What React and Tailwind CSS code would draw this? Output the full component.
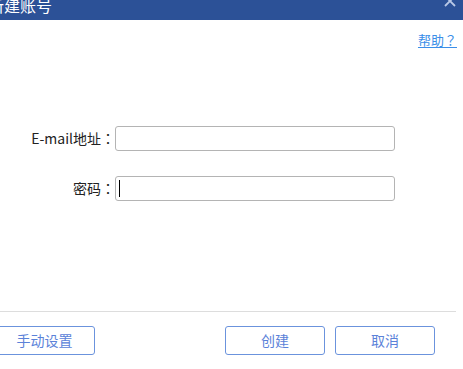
import React from 'react';

const font = { fontFamily: '"Noto Sans CJK SC", "Noto Sans", sans-serif' };
const tc = { fontFamily: '"Noto Sans CJK TC", sans-serif' };

export default function App() {
  return (
    <div className="w-[463px] h-[369px] overflow-hidden bg-white flex flex-col" style={font}>
      {/* title bar */}
      <div className="h-[20px] shrink-0 bg-[#2c5197] flex justify-between overflow-hidden">
        <span className="-ml-[12px] -mt-[5px] text-[16px] leading-[20px] text-white">新建账号</span>
        <svg width="14" height="14" viewBox="0 0 14 14" className="-mt-[6px] mr-[6px]">
          <path d="M2 2 L12 12 M12 2 L2 12" stroke="#b9c8e6" strokeWidth="1.8" />
        </svg>
      </div>

      {/* help */}
      <div className="flex justify-end pr-[6px] mt-[12px]">
        <a className="text-[13px] leading-[16px] text-[#3b8ee8] underline underline-offset-2 cursor-pointer">
          帮助<span style={tc}>？</span>
        </a>
      </div>

      {/* form */}
      <div className="flex flex-col gap-[25px] mt-[78px]">
        <div className="flex items-center">
          <label className="w-[115px] text-right text-[14px] text-[#222]">
            E-mail地址<span style={tc}>：</span>
          </label>
          <input className="w-[280px] h-[25px] border border-[#b4b4b4] rounded-[3px] outline-none px-[3px] text-[14px]" />
        </div>
        <div className="flex items-center">
          <label className="w-[115px] text-right text-[14px] text-[#222]">
            密码<span style={tc}>：</span>
          </label>
          <div className="w-[280px] h-[25px] border border-[#b4b4b4] rounded-[3px] flex items-center pl-[3px]">
            <div className="w-[1px] h-[17px] bg-black" />
          </div>
        </div>
      </div>

      {/* footer */}
      <div className="mt-[110px] w-[456px] border-t border-[#dddddd]" />
      <div className="flex mt-[14px] text-[14px] text-[#5b82d9]">
        <button className="-ml-[6px] w-[101px] h-[29px] border border-[#6b93dd] rounded-[3px]">手动设置</button>
        <button className="ml-[130px] w-[100px] h-[29px] border border-[#6b93dd] rounded-[3px]">创建</button>
        <button className="ml-[10px] w-[100px] h-[29px] border border-[#6b93dd] rounded-[3px]">取消</button>
      </div>
    </div>
  );
}
